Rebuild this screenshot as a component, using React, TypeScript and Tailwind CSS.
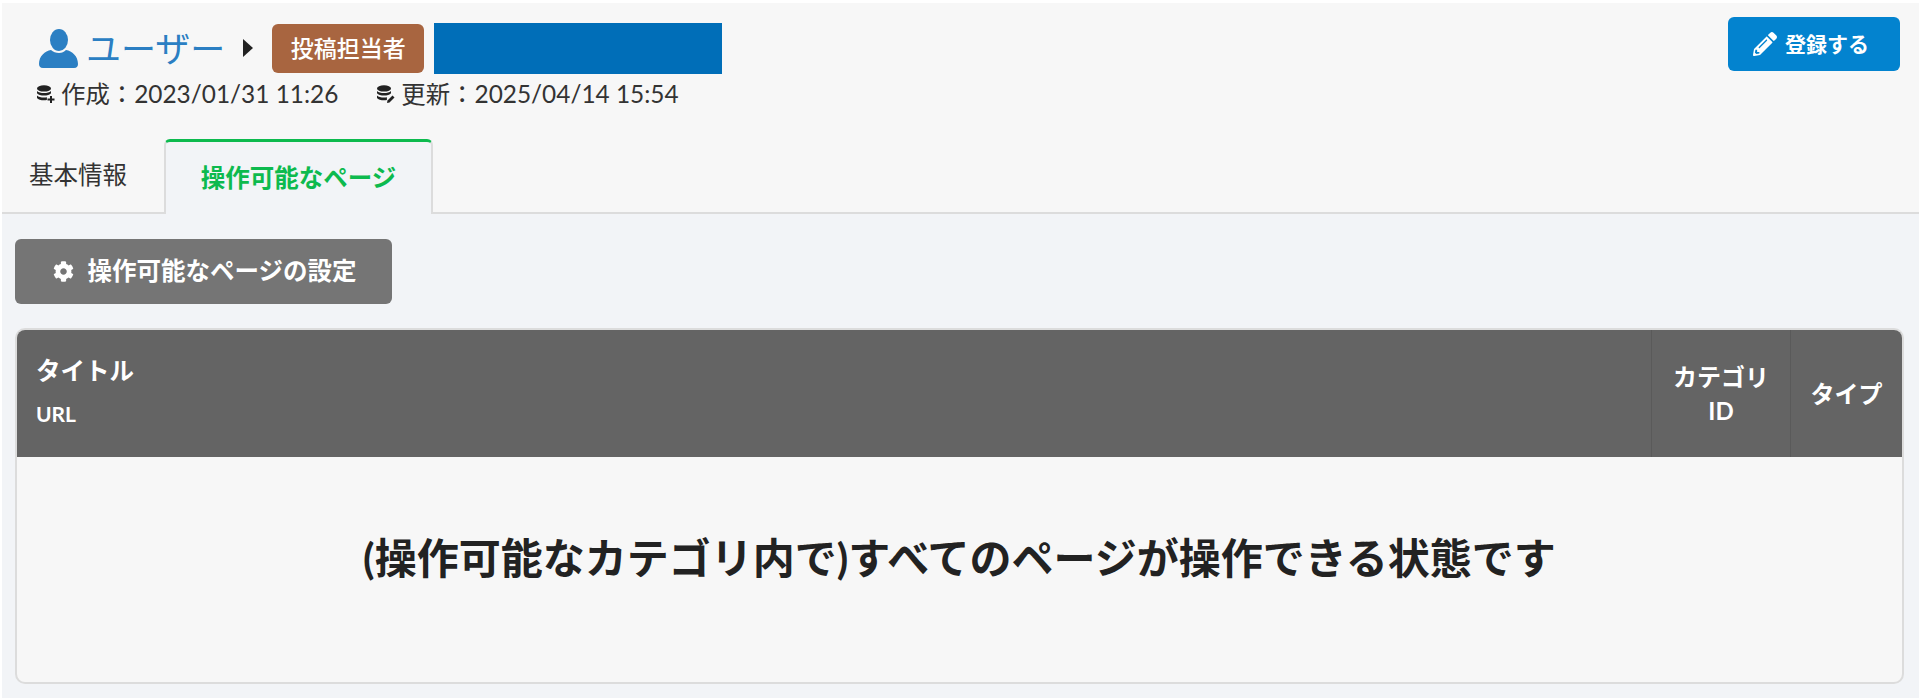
import { FaPencilAlt, FaCog } from "react-icons/fa";

function DbIcon({ kind }: { kind: "plus" | "edit" }) {
  return (
    <svg viewBox="0 0 20 18" className="h-[18px] w-[20px] shrink-0 text-[#222]" fill="currentColor">
      <ellipse cx="9" cy="3.400" rx="7" ry="3.200" />
      <path d="M2 6c1.400 1.500 4 2.100 7 2.100S14.600 7.500 16 6v2.200c-1 1.500-4 2.300-7 2.300S3 9.700 2 8.200z" />
      <path d="M2 10.600c1.400 1.400 4 2 7 2 1 0 2-.1 2.900-.3v2.600c-1 .2-1.900.3-2.900.3-3 0-6-.8-7-2.300z" />
      {kind === "plus" ? (
        <path d="M15 11h2v2.500h2.500v2H17V18h-2v-2.500h-2.500v-2H15z" />
      ) : (
        <path d="M17.500 10.500l2 2-5 5-2.500.5.500-2.500z" />
      )}
    </svg>
  );
}

function UserIcon() {
  return (
    <svg viewBox="0 0 39 39" className="h-[39px] w-[39px] shrink-0 fill-[#2b7fc3]">
      <ellipse cx="20" cy="11" rx="9" ry="11" />
      <path d="M0 35c0-8 6-13 12-14 2 2 5 3 8 3s5-1 7-3c6 1 12 6 12 14 0 2-1 4-4 4H4c-3 0-4-2-4-4z" />
    </svg>
  );
}

export default function App() {
  return (
    <div className="min-h-[699px] bg-white pt-[3px] pl-[2px] pr-px pb-px font-['Lato','Noto_Sans_CJK_JP',sans-serif] text-[#333]">
      <div className="flex h-[695px] flex-col bg-[#f7f7f7]">
        <header className="flex h-[136px] shrink-0 justify-between pr-[19px]">
          <div>
            <div className="mt-[19px] flex h-[52px] items-center pl-[37px]">
              <UserIcon />
              <span className="ml-[8px] text-[35px] leading-none text-[#2b7fc3]">ユーザー</span>
              <svg viewBox="0 0 10 18" className="ml-[18px] h-[18px] w-[10px] fill-[#222]">
                <path d="M0 0l10 9-10 9z" />
              </svg>
              <span className="ml-[19px] flex h-[49px] w-[152px] items-center justify-center rounded-[6px] bg-[#a86540] text-[23px] font-medium text-white">
                投稿担当者
              </span>
              <span className="ml-[10px] h-[51px] w-[288px] bg-[#006eb8]" />
            </div>
            <div className="mt-[5px] flex items-center pl-[33px] text-[24.4px] leading-[30px] text-[#333]">
              <DbIcon kind="plus" />
              <span className="ml-[6px]">作成：2023/01/31 11:26</span>
              <span className="ml-[37px]">
                <DbIcon kind="edit" />
              </span>
              <span className="ml-[6px]">更新：2025/04/14 15:54</span>
            </div>
          </div>
          <button className="mt-[14px] flex h-[54px] w-[172px] items-center justify-center gap-[8px] rounded-[6px] bg-[#0383cf] pr-[6px] text-[21px] font-bold text-white">
            <FaPencilAlt className="h-[24px] w-[24px]" />
            登録する
          </button>
        </header>

        <nav className="flex h-[75px] shrink-0 border-b-2 border-[#dcdcdc]">
          <div className="flex w-[162px] items-center justify-center pr-[10px] text-[24.5px] text-[#333]">基本情報</div>
          <div className="relative -mb-[2px] flex w-[269px] items-center justify-center rounded-t-[6px] border-x-2 border-t-[3px] border-x-[#dcdcdc] border-t-[#0dba4e] bg-[#f2f4f7] text-[24.5px] font-bold text-[#0dba4e]">
            操作可能なページ
          </div>
        </nav>

        <main className="flex-1 bg-[#f2f4f7] pl-[13px] pr-[15px] pt-[25px]">
          <button className="flex h-[65px] w-[377px] items-center justify-center gap-[13px] rounded-[6px] bg-[#757575] pl-[3px] text-[24.5px] font-bold text-white">
            <FaCog className="h-[21px] w-[21px]" />
            操作可能なページの設定
          </button>

          <section className="mt-[24px] flex h-[356px] flex-col overflow-hidden rounded-[10px] border-2 border-[#dcdcdc] bg-[#f7f7f7]">
            <div className="flex h-[127px] shrink-0 bg-[#646464] font-bold text-white">
              <div className="flex-1 pl-[19px] pt-[23px]">
                <div className="text-[24.5px] leading-[36px]">タイトル</div>
                <div className="mt-[10px] text-[21px] leading-[30px]">URL</div>
              </div>
              <div className="flex w-[139px] items-center justify-center border-l border-[#5a5a5a] text-center text-[24px] leading-[34px]">
                カテゴリ
                <br />
                ID
              </div>
              <div className="flex w-[112px] items-center justify-center border-l border-[#5a5a5a] text-[24px]">
                タイプ
              </div>
            </div>
            <div className="flex flex-1 items-center justify-center pb-[23px] text-[42px] font-bold text-[#222]">
              (操作可能なカテゴリ内で)すべてのページが操作できる状態です
            </div>
          </section>
        </main>
      </div>
    </div>
  );
}
